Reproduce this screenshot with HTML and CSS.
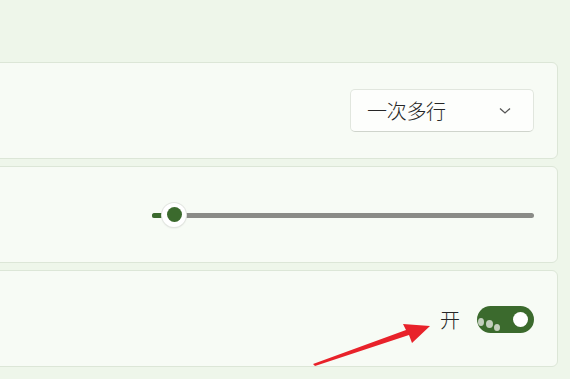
FILE: index.html
```html
<!DOCTYPE html>
<html lang="zh">
<head>
<meta charset="utf-8">
<link rel="stylesheet" href="styles.css">
</head>
<body>
<div class="list">
  <div class="card">
    <div class="dropdown">
      <span class="dd-text">一次多行</span>
      <svg class="chev" width="12" height="8" viewBox="0 0 12 8"><path d="M1 1.5 L6 6 L11 1.5" fill="none" stroke="#555" stroke-width="1.3"/></svg>
    </div>
  </div>
  <div class="card">
    <div class="slider">
      <div class="track"></div>
      <div class="fill"></div>
      <div class="thumb"><div class="thumb-dot"></div></div>
    </div>
  </div>
  <div class="card">
    <span class="state">开</span>
    <div class="toggle">
      <span class="blob b1"></span><span class="blob b2"></span><span class="blob b3"></span>
      <div class="knob"></div>
    </div>
  </div>
</div>
<svg class="arrow" width="570" height="379" viewBox="0 0 570 379">
  <polygon points="313,364 406,330 403,324 430,326 412,343 409,335 315,366" fill="#e8222a"/>
</svg>
</body>
</html>
```
FILE: styles.css
```css
html, body {
  margin: 0;
  padding: 0;
}
body {
  background: #eef6ea;
  font-family: "Noto Sans CJK SC", "Noto Sans", sans-serif;
  width: 570px;
  height: 379px;
  overflow: hidden;
  position: relative;
}
.list {
  margin: 62px 12px 0 -10px;
  display: flex;
  flex-direction: column;
  gap: 7px;
}
.card {
  height: 95px;
  background: #f7fbf5;
  border: 1px solid #dce6d7;
  border-radius: 6px;
  display: flex;
  align-items: center;
  justify-content: flex-end;
  padding-right: 23px;
}
.dropdown {
  width: 184px;
  height: 43px;
  background: #fdfefc;
  border: 1px solid #e1e6de;
  border-bottom-color: #cfd4cc;
  border-radius: 5px;
  display: flex;
  align-items: center;
  justify-content: space-between;
  padding: 0 22px 0 16px;
  box-sizing: border-box;
}
.dd-text {
  font-size: 20px;
  font-weight: 300;
  color: #262626;
  letter-spacing: -0.3px;
}
.chev {
  display: block;
}
.slider {
  width: 382px;
  height: 24px;
  position: relative;
}
.track {
  position: absolute;
  left: 0;
  right: 0;
  top: 10px;
  height: 5px;
  border-radius: 3px;
  background: #8a8b87;
}
.fill {
  position: absolute;
  left: 0;
  width: 14px;
  top: 10px;
  height: 5px;
  border-radius: 3px;
  background: #3b6a2d;
}
.thumb {
  position: absolute;
  left: 10px;
  top: 0;
  width: 24px;
  height: 24px;
  border-radius: 50%;
  background: #ffffff;
  box-shadow: 0 0 0 1px #e3e6e1, 0 1px 2px rgba(0,0,0,0.12);
  display: flex;
  align-items: center;
  justify-content: center;
}
.thumb-dot {
  width: 15px;
  height: 15px;
  border-radius: 50%;
  background: #3b6a2d;
}
.state {
  font-size: 20px;
  font-weight: 300;
  color: #262626;
  margin-right: 17px;
  line-height: 1;
  margin-top: 2px;
}
.toggle {
  width: 57px;
  height: 27px;
  border-radius: 14px;
  background: #3b6a2d;
  position: relative;
  display: flex;
  align-items: center;
  justify-content: flex-end;
  padding-right: 6px;
  box-sizing: border-box;
  margin-top: 1px;
}
.knob {
  width: 15px;
  height: 15px;
  border-radius: 50%;
  background: #ffffff;
}
.blob {
  position: absolute;
  border-radius: 50%;
  background: rgba(220, 225, 215, 0.85);
}
.b1 { left: 1px; top: 12px; width: 6px; height: 8px; }
.b2 { left: 9px; top: 14px; width: 7px; height: 8px; }
.b3 { left: 17px; top: 18px; width: 6px; height: 7px; }
.arrow {
  position: absolute;
  left: 0;
  top: 0;
}
```
